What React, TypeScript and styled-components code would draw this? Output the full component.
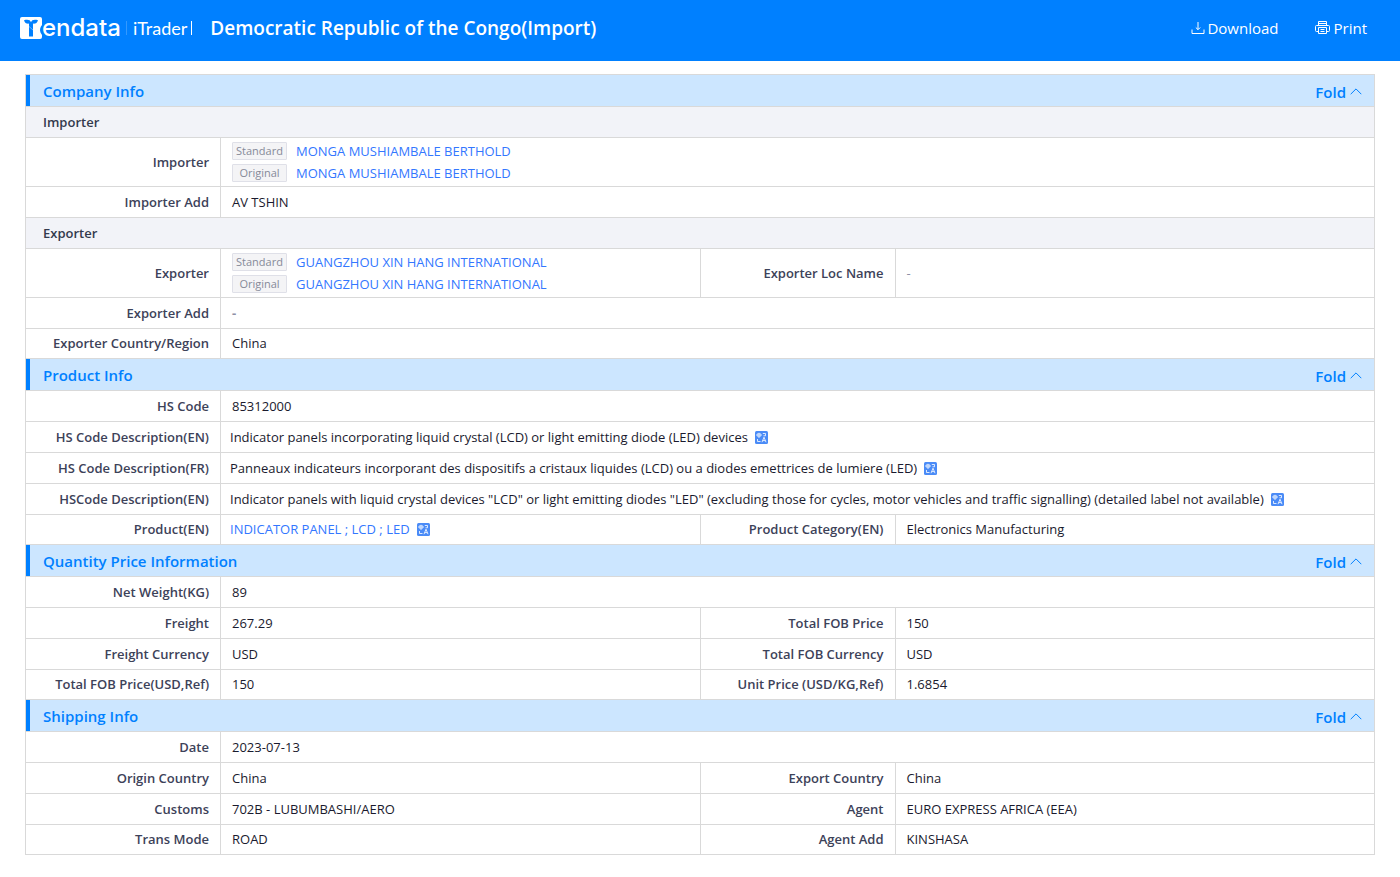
import React from "react";
import styled, { createGlobalStyle, css } from "styled-components";

const Global = createGlobalStyle`
  * { box-sizing: border-box; }
  body {
    margin: 0;
    background: #fff;
    color: #1a1a2e;
    font-family: "Open Sans", "Noto Sans", sans-serif;
    font-size: 13px;
    line-height: 20px;
  }
`;

const TopBar = styled.header`
  display: flex;
  align-items: center;
  height: 61px;
  padding: 0 33px 5px 20px;
  background: #0080ff;
  color: #fff;
`;

const Brand = styled.a`
  display: flex;
  align-items: center;
  color: #fff;
  text-decoration: none;
  font-family: Inter, sans-serif;
  line-height: 22px;
`;

const BrandName = styled.span`
  font-size: 24px;
  font-weight: 500;
`;

const BrandProduct = styled.span`
  display: flex;
  align-items: center;
  margin-left: 5px;
  padding-left: 6px;
  border-left: 1px solid #3399ff;
  font-family: Lato, sans-serif;
  font-size: 18px;
  line-height: 14px;
`;

const Caret = styled.span`
  width: 1px;
  height: 14px;
  margin-left: 4px;
  background: #fff;
`;

const PageTitle = styled.h1`
  flex: 1;
  margin: 0 0 0 18px;
  font-size: 19px;
  font-weight: 600;
  line-height: 28px;
`;

const Actions = styled.div`
  display: flex;
  gap: 36px;
`;

const ActionButton = styled.button`
  display: flex;
  align-items: center;
  gap: 2px;
  padding: 0;
  border: 0;
  background: none;
  color: inherit;
  font: inherit;
  font-size: 15px;
  cursor: pointer;
`;

const Main = styled.main`
  padding: 13px 25px 22px;
`;

const InfoTable = styled.table`
  width: 100%;
  table-layout: fixed;
  border-collapse: separate;
  border-spacing: 0;
  border: solid #d9d9d9;
  border-width: 1px 0 0 1px;
`;

const LabelCol = styled.col`
  width: 195px;
`;

const cell = css`
  border: solid #d9d9d9;
  border-width: 0 1px 1px 0;
`;

const Row = styled.tr`
  height: 31px;
  &:last-child { height: 30px; }
  &:last-child > * { padding-bottom: 1px; }
`;

const SectionCell = styled.th`
  ${cell}
  height: 32px;
  padding: 0;
  background: #cce6ff;
  text-align: left;
`;

const SectionBar = styled.div`
  display: flex;
  align-items: center;
  justify-content: space-between;
  height: 31px;
  padding: 0 12px 0 13px;
  border-left: 4px solid #0080ff;
  color: #0080ff;
  font-size: 15px;
  font-weight: 600;
`;

const SectionTitle = styled.h2`
  margin: 0;
  font: inherit;
`;

const FoldButton = styled.button`
  display: flex;
  align-items: center;
  gap: 4px;
  padding: 2px 0 0;
  border: 0;
  background: none;
  color: inherit;
  font: inherit;
  cursor: pointer;
`;

const GroupCell = styled.th`
  ${cell}
  padding: 0 17px;
  background: #f2f3f8;
  color: #333a4d;
  font-weight: 600;
  text-align: left;
`;

const LabelCell = styled.th`
  ${cell}
  padding: 0 11px;
  color: #3d4259;
  font-weight: 600;
  text-align: right;
  white-space: nowrap;
`;

const ValueCell = styled.td<{ $tight?: boolean }>`
  ${cell}
  padding: 0 ${(p) => (p.$tight ? 9 : 11)}px;
`;

const Line = styled.div`
  display: flex;
  align-items: center;
  gap: 7px;
`;

const Names = styled.div`
  display: grid;
  gap: 4px;
  padding: 4px 0;
`;

const NameRow = styled.div`
  display: flex;
  align-items: center;
  gap: 9px;
  height: 18px;
`;

const Tag = styled.span`
  width: 55px;
  height: 18px;
  border: 1px solid #dfe0e8;
  border-radius: 1px;
  background: #f4f4f6;
  color: #868a99;
  font-size: 11px;
  line-height: 16px;
  text-align: center;
`;

const TextLink = styled.a`
  color: #3377ff;
  text-decoration: none;
`;

const Empty = styled.span<{ $strong?: boolean }>`
  color: #8f90a6;
  font-weight: ${(p) => (p.$strong ? 700 : 400)};
`;

const TranslateButton = styled.button`
  display: flex;
  padding: 0;
  border: 0;
  background: none;
  cursor: pointer;
`;

const LogoMark = () => (
  <svg width="22" height="22" viewBox="0 0 22 22" aria-hidden="true">
    <path d="M2 0H20a2 2 0 0 1 2 2V8q-3 3.500-1.500 7.500L22 18v2a2 2 0 0 1-2 2H2a2 2 0 0 1-2-2V2a2 2 0 0 1 2-2z" fill="#fff" />
    <path d="M4 3.200C8 2.200 10.300 3 11 5.200C11.700 3 14 2.200 18 3.200C17.300 6 15.500 6.800 13 6.600V19.500H9V6.600C6.500 6.800 4.700 6 4 3.200z" fill="#0080ff" />
    <path d="M9 9.500L13 13" stroke="#fff" strokeOpacity=".5" strokeWidth=".8" />
  </svg>
);

const DownloadIcon = () => (
  <svg width="14" height="14" viewBox="0 0 14 14" fill="none" stroke="currentColor" aria-hidden="true">
    <path d="M1 8.500v4h12v-4M7 1v7.500M4.800 6.500L7 8.700l2.200-2.200" />
  </svg>
);

const PrintIcon = () => (
  <svg width="17" height="14" viewBox="0 0 17 14" fill="none" stroke="currentColor" aria-hidden="true">
    <path d="M3.500 4.500V.5h8v4M3.500 2.500h8M3.500 10.500H1.500a1 1 0 0 1-1-1v-4a1 1 0 0 1 1-1h12a1 1 0 0 1 1 1v4a1 1 0 0 1-1 1h-2M3.500 6.500h8v6h-8zM5.500 8.500h4M5.500 10.500h4" />
  </svg>
);

const ChevronUp = () => (
  <svg width="12" height="8" viewBox="0 0 12 8" fill="none" stroke="currentColor" aria-hidden="true">
    <path d="M.7 6.200L6 .9l5.300 5.300" />
  </svg>
);

const Translate = () => (
  <TranslateButton type="button" aria-label="Translate">
    <svg width="13" height="13" viewBox="0 0 13 13" fill="none" aria-hidden="true">
      <rect width="13" height="13" rx="1.500" fill="#4a8bf7" />
      <g stroke="#fff" strokeWidth=".9" strokeOpacity=".9">
        <path d="M2 3h4v2H2zM4 1.800V7M7.800 2.500h2.700v2.300H8.500M2.500 8v2.500H5.500M7 11.200l2-5 2 5M7.700 9.600h2.600" />
      </g>
    </svg>
  </TranslateButton>
);

type Field = { label: string; value: React.ReactNode; tight?: boolean };
type Entry = { group: string } | { fields: Field[] };

const NamePair = ({ name }: { name: string }) => (
  <Names>
    {["Standard", "Original"].map((kind) => (
      <NameRow key={kind}>
        <Tag>{kind}</Tag>
        <TextLink href="#">{name}</TextLink>
      </NameRow>
    ))}
  </Names>
);

const row = (...pairs: [string, React.ReactNode][]): Entry => ({
  fields: pairs.map(([label, value]) => ({ label, value })),
});

const translated = (label: string, text: React.ReactNode): Field => ({
  label,
  tight: true,
  value: (
    <Line>
      <span>{text}</span>
      <Translate />
    </Line>
  ),
});

const sections: { title: string; entries: Entry[] }[] = [
  {
    title: "Company Info",
    entries: [
      { group: "Importer" },
      row(["Importer", <NamePair name="MONGA MUSHIAMBALE BERTHOLD" />]),
      row(["Importer Add", "AV TSHIN"]),
      { group: "Exporter" },
      row(
        ["Exporter", <NamePair name="GUANGZHOU XIN HANG INTERNATIONAL" />],
        ["Exporter Loc Name", <Empty>-</Empty>],
      ),
      row(["Exporter Add", <Empty $strong>-</Empty>]),
      row(["Exporter Country/Region", "China"]),
    ],
  },
  {
    title: "Product Info",
    entries: [
      row(["HS Code", "85312000"]),
      { fields: [translated("HS Code Description(EN)", "Indicator panels incorporating liquid crystal (LCD) or light emitting diode (LED) devices")] },
      { fields: [translated("HS Code Description(FR)", "Panneaux indicateurs incorporant des dispositifs a cristaux liquides (LCD) ou a diodes emettrices de lumiere (LED)")] },
      { fields: [translated("HSCode Description(EN)", 'Indicator panels with liquid crystal devices "LCD" or light emitting diodes "LED" (excluding those for cycles, motor vehicles and traffic signalling) (detailed label not available)')] },
      {
        fields: [
          translated("Product(EN)", <TextLink href="#">INDICATOR PANEL ; LCD ; LED</TextLink>),
          { label: "Product Category(EN)", value: "Electronics Manufacturing" },
        ],
      },
    ],
  },
  {
    title: "Quantity Price Information",
    entries: [
      row(["Net Weight(KG)", "89"]),
      row(["Freight", "267.29"], ["Total FOB Price", "150"]),
      row(["Freight Currency", "USD"], ["Total FOB Currency", "USD"]),
      row(["Total FOB Price(USD,Ref)", "150"], ["Unit Price (USD/KG,Ref)", "1.6854"]),
    ],
  },
  {
    title: "Shipping Info",
    entries: [
      row(["Date", "2023-07-13"]),
      row(["Origin Country", "China"], ["Export Country", "China"]),
      row(["Customs", "702B - LUBUMBASHI/AERO"], ["Agent", "EURO EXPRESS AFRICA (EEA)"]),
      row(["Trans Mode", "ROAD"], ["Agent Add", "KINSHASA"]),
    ],
  },
];

export default function App() {
  return (
    <>
      <Global />
      <TopBar>
        <Brand href="#">
          <LogoMark />
          <BrandName>endata</BrandName>
          <BrandProduct>
            iTrader
            <Caret />
          </BrandProduct>
        </Brand>
        <PageTitle>Democratic Republic of the Congo(Import)</PageTitle>
        <Actions>
          <ActionButton type="button">
            <DownloadIcon />
            Download
          </ActionButton>
          <ActionButton type="button">
            <PrintIcon />
            Print
          </ActionButton>
        </Actions>
      </TopBar>
      <Main>
        <InfoTable>
          <colgroup>
            <LabelCol />
            <col />
            <LabelCol />
            <col />
          </colgroup>
          {sections.map((section) => (
            <tbody key={section.title}>
              <tr>
                <SectionCell colSpan={4} scope="colgroup">
                  <SectionBar>
                    <SectionTitle>{section.title}</SectionTitle>
                    <FoldButton type="button">
                      Fold
                      <ChevronUp />
                    </FoldButton>
                  </SectionBar>
                </SectionCell>
              </tr>
              {section.entries.map((entry, i) => (
                <Row key={i}>
                  {"group" in entry ? (
                    <GroupCell colSpan={4}>{entry.group}</GroupCell>
                  ) : (
                    entry.fields.map((field) => (
                      <React.Fragment key={field.label}>
                        <LabelCell scope="row">{field.label}</LabelCell>
                        <ValueCell $tight={field.tight} colSpan={entry.fields.length === 1 ? 3 : 1}>
                          {field.value}
                        </ValueCell>
                      </React.Fragment>
                    ))
                  )}
                </Row>
              ))}
            </tbody>
          ))}
        </InfoTable>
      </Main>
    </>
  );
}
